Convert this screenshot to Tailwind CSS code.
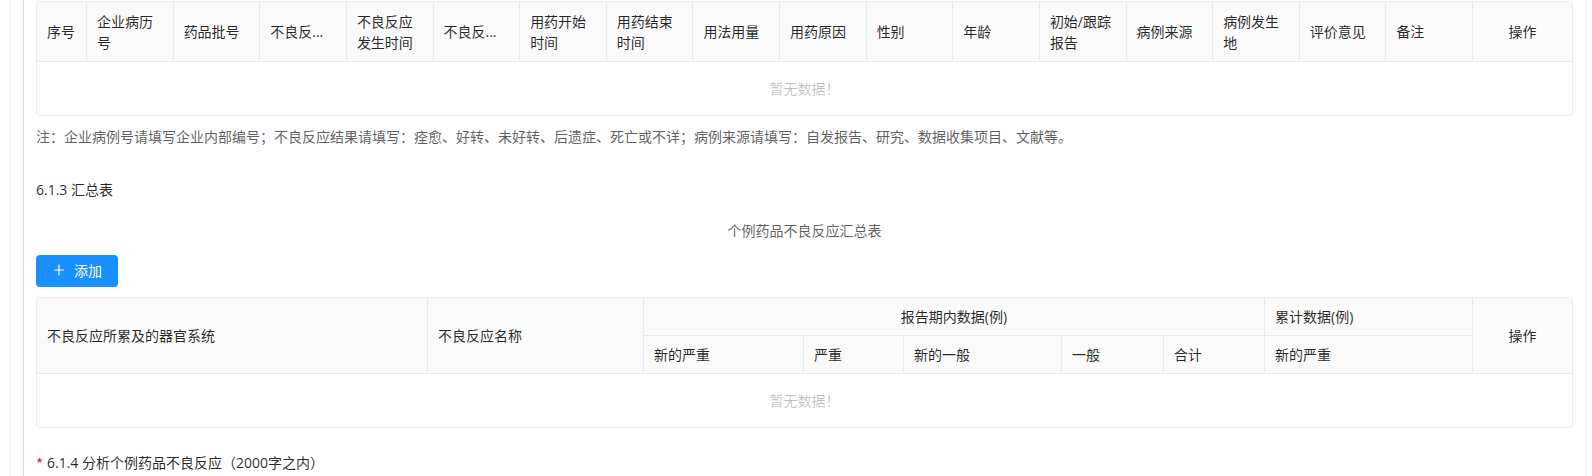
<!DOCTYPE html>
<html lang="zh-CN">
<head>
<meta charset="utf-8">
<meta name="viewport" content="width=device-width, initial-scale=1">
<title>个例药品不良反应汇总表</title>
<script src="https://cdn.jsdelivr.net/npm/@tailwindcss/browser@4"></script>
</head>
<body class="bg-white font-['Open_Sans','Noto_Sans_CJK_SC',sans-serif] text-sm leading-[21px] text-black/85">
<main class="ml-[10px] mr-[5px] border-x border-[#f0f0f0]">
  <div class="ml-3 min-h-screen border-l border-[#dcdcdc] pl-3 pr-[13px] pt-px">
    <table class="w-full table-fixed border-separate border-spacing-0 rounded border-l border-t border-[#eeeeee] text-left [&_th]:border-b [&_th]:border-r [&_th]:border-[#eaeaea] [&_th]:bg-[#fafafa] [&_th]:px-[10px] [&_th]:font-normal">
      <colgroup><col class="w-[50px]"><col span="16"><col class="w-[100px]"></colgroup>
      <thead>
        <tr class="h-[60px]">
          <th scope="col" class="rounded-tl">序号</th>
          <th scope="col">企业病历号</th>
          <th scope="col">药品批号</th>
          <th scope="col">不良反...</th>
          <th scope="col">不良反应发生时间</th>
          <th scope="col">不良反...</th>
          <th scope="col">用药开始时间</th>
          <th scope="col">用药结束时间</th>
          <th scope="col">用法用量</th>
          <th scope="col">用药原因</th>
          <th scope="col">性别</th>
          <th scope="col">年龄</th>
          <th scope="col">初始/跟踪报告</th>
          <th scope="col">病例来源</th>
          <th scope="col">病例发生地</th>
          <th scope="col">评价意见</th>
          <th scope="col">备注</th>
          <th scope="col" class="rounded-tr text-center">操作</th>
        </tr>
      </thead>
      <tbody>
        <tr class="h-[54px]"><td colspan="18" class="rounded-b border-b border-r border-[#eeeeee] text-center text-black/25">暂无数据！</td></tr>
      </tbody>
    </table>
    <p class="mt-[10px] text-black/65">注：企业病例号请填写企业内部编号；不良反应结果请填写：痊愈、好转、未好转、后遗症、死亡或不详；病例来源请填写：自发报告、研究、数据收集项目、文献等。</p>
    <h3 class="mt-8">6.1.3 汇总表</h3>
    <p class="mt-5 text-center text-black/65">个例药品不良反应汇总表</p>
    <button type="button" class="mt-[14px] flex h-8 items-center gap-2 rounded bg-[#1890ff] px-4 pb-0.5 text-white">
      <svg class="size-[14px]" viewBox="0 0 14 14" fill="none" stroke="currentColor" stroke-width="1.2" aria-hidden="true"><path d="M7 1.5v11M2 7h10"/></svg>
      <span>添加</span>
    </button>
    <table class="mt-[10px] w-full table-fixed border-separate border-spacing-0 rounded border-l border-t border-[#eeeeee] text-left [&_th]:border-b [&_th]:border-r [&_th]:border-[#eaeaea] [&_th]:bg-[#fafafa] [&_th]:px-[10px] [&_th]:font-normal">
      <colgroup><col><col class="w-[216px]"><col class="w-[160px]"><col class="w-[100px]"><col class="w-[158px]"><col class="w-[102px]"><col class="w-[101px]"><col class="w-[208px]"><col class="w-[100px]"></colgroup>
      <thead>
        <tr class="h-[38px]">
          <th scope="col" rowspan="2" class="rounded-tl">不良反应所累及的器官系统</th>
          <th scope="col" rowspan="2">不良反应名称</th>
          <th scope="colgroup" colspan="5" class="text-center">报告期内数据(例)</th>
          <th scope="col">累计数据(例)</th>
          <th scope="col" rowspan="2" class="rounded-tr text-center">操作</th>
        </tr>
        <tr class="h-[38px]">
          <th scope="col">新的严重</th>
          <th scope="col">严重</th>
          <th scope="col">新的一般</th>
          <th scope="col">一般</th>
          <th scope="col">合计</th>
          <th scope="col">新的严重</th>
        </tr>
      </thead>
      <tbody>
        <tr class="h-[54px]"><td colspan="9" class="rounded-b border-b border-r border-[#eeeeee] text-center text-black/25">暂无数据！</td></tr>
      </tbody>
    </table>
    <h3 class="mt-6 flex gap-1"><span class="w-[7px] pt-0.5 font-['Liberation_Mono',monospace] text-xs leading-[21px] font-bold text-[#f5222d]">*</span>6.1.4 分析个例药品不良反应（2000字之内）</h3>
  </div>
</main>
</body>
</html>
